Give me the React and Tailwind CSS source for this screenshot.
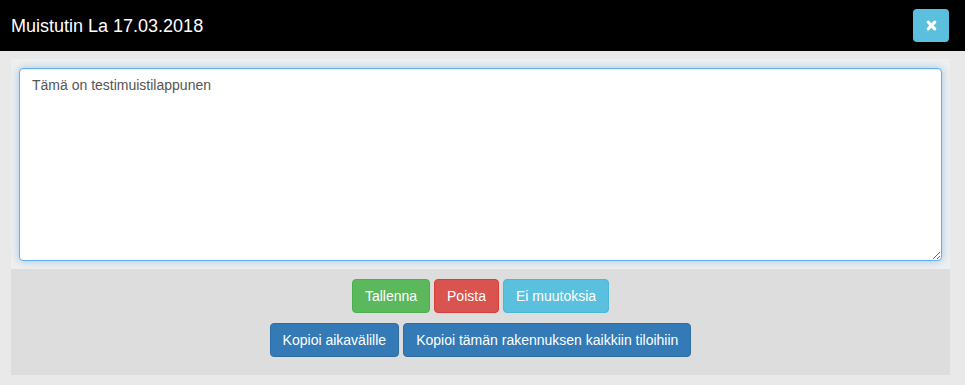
import React, { useState, useEffect, useRef } from "react";

export default function App() {
    const [note, setNote] = useState("Tämä on testimuistilappunen");
    const areaRef = useRef(null);

    useEffect(() => {
        const el = areaRef.current;
        if (el) {
            el.focus();
            el.setSelectionRange(el.value.length, el.value.length);
        }
    }, []);

    return (
        <div className="w-[965px] h-[385px] bg-[#e9e9e9] font-['Liberation_Sans',Arial,sans-serif] overflow-hidden">
            {/* Header */}
            <div className="h-[51px] bg-black flex items-center justify-between pl-[11px] pr-[16px]">
                <h4 className="text-white text-[18px] leading-none">Muistutin La 17.03.2018</h4>
                <button className="w-[36px] h-[33px] bg-[#5bc0de] rounded-[4px] flex items-center justify-center">
                    <svg width="11" height="11" viewBox="0 0 10 10">
                        <path d="M2 2 L8 8 M8 2 L2 8" stroke="white" strokeWidth="2.8" strokeLinecap="round" />
                    </svg>
                </button>
            </div>

            {/* Body */}
            <div className="pt-[8px] pl-[11px] pr-[15px]">
                <div className="bg-[#efefef] pt-[9px] pb-[8px] px-[8px]">
                    <textarea
                        ref={areaRef}
                        value={note}
                        onChange={(e) => setNote(e.target.value)}
                        className="block w-full h-[193px] bg-white border border-[#66afe9] rounded-[4px] px-[12px] py-[6px] text-[14px] leading-[20px] text-[#555] caret-[#333] outline-none shadow-[inset_0_1px_1px_rgba(0,0,0,0.075),0_0_8px_rgba(102,175,233,0.6)] resize-y"
                    />
                </div>

                {/* Footer */}
                <div className="bg-[#dddddd] h-[106px] pt-[10px] flex flex-col items-center gap-[10px]">
                    <div className="flex gap-[4px]">
                        <button className="h-[34px] px-[12px] rounded-[4px] bg-[#5cb85c] border border-[#4cae4c] text-white text-[14px]">Tallenna</button>
                        <button className="h-[34px] px-[12px] rounded-[4px] bg-[#d9534f] border border-[#d43f3a] text-white text-[14px]">Poista</button>
                        <button className="h-[34px] px-[12px] rounded-[4px] bg-[#5bc0de] border border-[#46b8da] text-white text-[14px]">Ei muutoksia</button>
                    </div>
                    <div className="flex gap-[4px]">
                        <button className="h-[34px] px-[12px] rounded-[4px] bg-[#337ab7] border border-[#2e6da4] text-white text-[14px]">Kopioi aikavälille</button>
                        <button className="h-[34px] px-[12px] rounded-[4px] bg-[#337ab7] border border-[#2e6da4] text-white text-[14px]">Kopioi tämän rakennuksen kaikkiin tiloihiin</button>
                    </div>
                </div>
            </div>
        </div>
    );
}
